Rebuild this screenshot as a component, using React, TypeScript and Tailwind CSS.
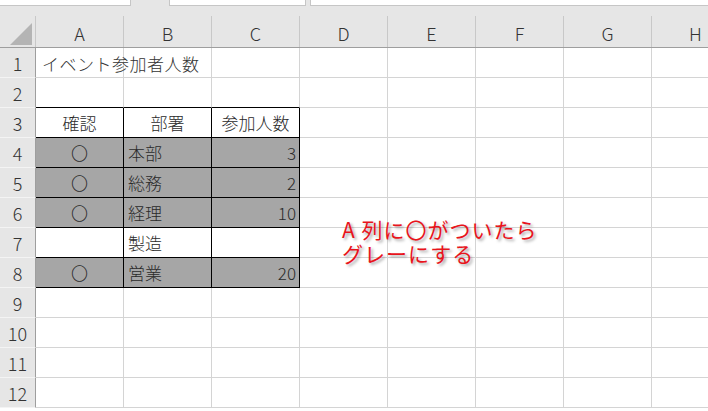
import React from "react";

const COLS = ["A", "B", "C", "D", "E", "F", "G", "H"];

type Cell = { text?: string; align?: "left" | "center" | "right"; fill?: boolean };

// data for rows 1..12, keyed by column index
const DATA: Record<number, Record<number, Cell>> = {
  3: { 0: { text: "確認", align: "center" }, 1: { text: "部署", align: "center" }, 2: { text: "参加人数", align: "center" } },
  4: { 0: { text: "〇", align: "center", fill: true }, 1: { text: "本部", fill: true }, 2: { text: "3", align: "right", fill: true } },
  5: { 0: { text: "〇", align: "center", fill: true }, 1: { text: "総務", fill: true }, 2: { text: "2", align: "right", fill: true } },
  6: { 0: { text: "〇", align: "center", fill: true }, 1: { text: "経理", fill: true }, 2: { text: "10", align: "right", fill: true } },
  7: { 1: { text: "製造" } },
  8: { 0: { text: "〇", align: "center", fill: true }, 1: { text: "営業", fill: true }, 2: { text: "20", align: "right", fill: true } },
};

function GridCell({ row, col }: { row: number; col: number }) {
  const cell = DATA[row]?.[col];
  const inTable = row >= 3 && row <= 8 && col <= 2;
  const aboveTable = row === 2 && col <= 2;
  const borderR = inTable ? "border-r-black" : "border-r-[#d4d4d4]";
  const borderB = inTable || aboveTable ? "border-b-black" : "border-b-[#d4d4d4]";
  const bg = cell?.fill ? "bg-[#a6a6a6]" : "bg-white";
  const align =
    cell?.align === "center" ? "justify-center" : cell?.align === "right" ? "justify-end pr-[3px]" : "justify-start pl-[4px]";
  return (
    <div className={`w-[88px] shrink-0 h-[30px] border-r border-b flex items-center ${borderR} ${borderB} ${bg} ${align}`}>
      {cell?.text && <span className="text-[17px] leading-none font-light text-[#2a2a2a]">{cell.text}</span>}
    </div>
  );
}

export default function App() {
  const rows = Array.from({ length: 12 }, (_, i) => i + 1);
  return (
    <div className="relative w-[708px] h-[411px] overflow-hidden bg-white font-['Noto_Sans_CJK_JP','Noto_Sans',sans-serif]">
      {/* ribbon remnants at the top */}
      <div className="h-[16px] bg-[#e6e6e6] flex items-start">
        <div className="w-[131px] h-[6px] bg-white border-r border-b border-[#c6c6c6]" />
        <div className="w-[38px]" />
        <div className="w-[137px] h-[6px] bg-white border-l border-r border-b border-[#c6c6c6]" />
        <div className="w-[4px]" />
        <div className="flex-1 h-[6px] bg-white border-l border-b border-[#c6c6c6]" />
      </div>

      {/* column headers */}
      <div className="flex h-[32px] bg-[#e6e6e6] border-b border-[#9e9e9e]">
        <div className="w-[36px] shrink-0 border-r border-[#c8c8c8] flex items-end justify-end pr-[3px] pb-[2px]">
          <svg width="22" height="22" viewBox="0 0 22 22">
            <polygon points="22,0 22,22 0,22" fill="#b4b4b4" />
          </svg>
        </div>
        {COLS.map((c) => (
          <div key={c} className="w-[88px] shrink-0 border-r border-[#c8c8c8] flex items-center justify-center pt-[2px]">
            <span className="text-[18px] leading-none font-light text-[#333]">{c}</span>
          </div>
        ))}
      </div>

      {/* rows */}
      {rows.map((r) => (
        <div key={r} className="flex h-[30px]">
          <div className="w-[36px] shrink-0 h-[30px] bg-[#e6e6e6] border-r border-r-[#9e9e9e] border-b border-b-[#f4f4f4] flex items-center justify-center">
            <span className="text-[18px] leading-none font-light text-[#333]">{r}</span>
          </div>
          <div className="relative flex">
            {COLS.map((_, ci) => (
              <GridCell key={ci} row={r} col={ci} />
            ))}
            {r === 1 && (
              <span className="absolute left-[6px] top-0 h-[30px] flex items-center text-[17px] leading-none font-light tracking-[0.5px] text-[#333] whitespace-nowrap">
                イベント参加者人数
              </span>
            )}
          </div>
        </div>
      ))}

      {/* text box note */}
      <div className="absolute left-[342px] top-[217px] text-[21px] leading-[24px] tracking-[1px] text-[#e8141c] [text-shadow:2px_2px_3px_rgba(0,0,0,0.35)] whitespace-nowrap">
        <div>A&nbsp;列に〇がついたら</div>
        <div>グレーにする</div>
      </div>
    </div>
  );
}
